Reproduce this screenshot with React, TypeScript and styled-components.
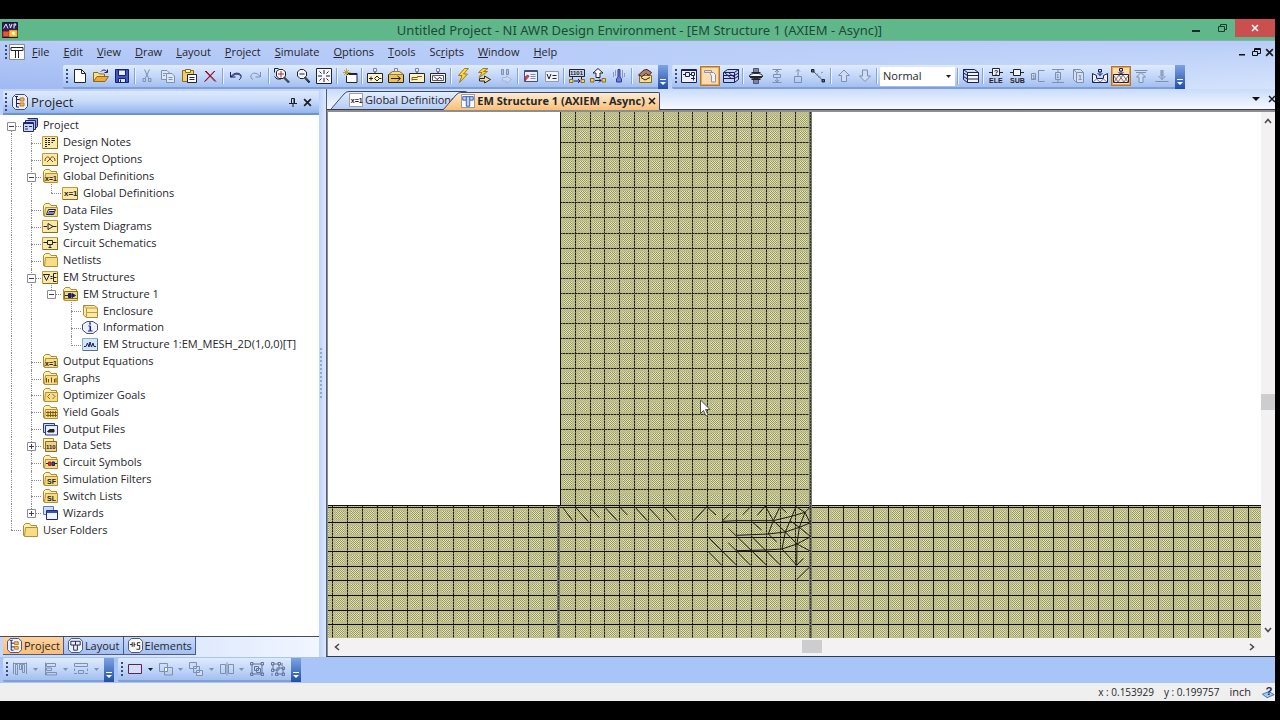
import React from "react";
import styled, { createGlobalStyle, css } from "styled-components";

const FONT = '"Open Sans", "Noto Sans", sans-serif';
const TITLE_FONT = '"Noto Sans", "Open Sans", sans-serif';

const GlobalStyle = createGlobalStyle`
  * { box-sizing: border-box; }
  body { margin: 0; background: #000; }
  button, select { font: inherit; color: inherit; border: 0; padding: 0; background: none; }
`;

/* ---------- icons ---------- */

// A shape is [path, stroke, fill]; a label is { t, x, y, size, fill }.
type Path = [string, string, string?];
type Label = { t: string; x: number; y: number; size: number; fill: string };
type Shape = Path | Label;

const NAVY = "#1b1f5e";
const INK = "#23232b";
const DIM = "#7f8fae";
const TAN = "#8a6c1c";
const GOLD = "#f3cf5b";
const PALE = "#fdf3c4";

const card: Shape[] = [["M.5 2.500H15.500V14.500H.5Z", "#c09a3c", "#fbe9a8"], ["M15.500 3V14.500H1", TAN]];
const folder: Shape[] = [
  ["M1.500 3.500L3.500 1.500H7.500L9 3.500H14.500V13.500H1.500Z", "#b08a2e", "#fdf0b4"],
  ["M3.500 5.500H15.500V14.500H2.500Z", "#b58f34", "#f6dc84"],
];
const block: Shape[] = [["M.5 5.500H15.500V14.500H.5Z", INK, PALE], ["M8 5V3.500", NAVY], ["M6.500 .5H9.500V3.500H6.500Z", "#7985a5", "#e9effc"]];

const ICONS: Record<string, Shape[]> = {
  newFile: [["M2.500 1.500H9.500L13.500 5.500V14.500H2.500Z", INK, "#fff"], ["M9.500 1.500V5.500H13.500", INK]],
  open: [["M.5 13.500V4.500H5L6.500 6H11.500V8", TAN, "#fbe08a"], ["M.5 13.500L4 8.500H15.500L12 13.500Z", TAN, "#f0a93a"], ["M8 3.500C9.500 1.500 13 1.500 14 4M14.500 1.500V4.500H11.500", NAVY]],
  save: [["M1.500 1.500H14.500V14.500H1.500Z", "#15207c", "#3d57c4"], ["M4.500 2H11.500V7.500H4.500Z", "#15207c", "#e8eefc"], ["M4.500 10.500H11.500V14.500H4.500Z", "#15207c", "#dfe4f2"], ["M6.500 11.500V14", "#15207c"]],
  cut: [["M5.500 1.500L9.500 10M10.500 1.500L6.500 10", DIM], ["M4 10.500H6.500V13.500H4Z M9.500 10.500H12V13.500H9.500Z", DIM]],
  copy: [["M1.500 2.500H7L9.500 5V11.500H1.500Z", DIM, "#dce7fb"], ["M6.500 5.500H12L14.500 8V14.500H6.500Z", DIM, "#dce7fb"], ["M3 5.500H6M3 7.500H5M8.500 9.500H12.500M8.500 11.500H12.500", DIM]],
  paste: [["M1.500 2.500H12.500V13.500H1.500Z", TAN, "#f2cf62"], ["M4.500 1.500H9.500V4.500H4.500Z", TAN, PALE], ["M6.500 6.500H15.500V14.500H6.500Z", INK, "#fff"], ["M8.500 9.500H13.500M8.500 11.500H13.500", NAVY]],
  del: [["M3 3L13 13.500M13 3L3 13.500M4 3L14 13.500M12.500 3L2.500 13.500", "#8f1020"]],
  undo: [["M2.500 4V9H7.500", NAVY], ["M3 8.500C6 4 12 4.500 13 7.500C13.500 10 12 11 11 12M3 9.500C6.500 5 12 5.500 12.500 8", NAVY]],
  redo: [["M12.500 4V9H7.500", DIM], ["M12 8.500C9 4 4 4.500 3 7.500C2.500 10 4 11 5 11.500", DIM]],
  zoomIn: [["M2.500 3.500L5 1.500H9L11.500 4V8L9 10.500H5L2.500 8Z", INK, "#eef3fd"], ["M10 9.500L15 14.500M10.500 9L15.500 14M9.500 10L14.500 15", INK], ["M7 3V9.500M4 6H10", "#b03030"], ["M.5 4.500V.5H4.500M.5 8.500L3 11H7", INK]],
  zoomOut: [["M2.500 4L5 1.500H8.500L11.500 4V8L8.500 10.500H5L2.500 8Z", INK, "#eef3fd"], ["M10 9.500L14.500 14.500M10.500 9L15 14M9.500 10L14 15", INK], ["M4.500 6H9.500", INK]],
  fit: [["M.5 .5H15.500V15.500H.5Z", INK, "#f4f7fe"], ["M8 2V6M8 10V14M2 8H6M10 8H14", INK], ["M3.500 3.500L5.500 5.500M12.500 3.500L10.500 5.500M3.500 12.500L5.500 10.500M12.500 12.500L10.500 10.500", INK]],
  newWin: [["M4.500 5.500H15V14.500H4.500Z", INK, "#fff"], ["M4.500 6.500H15", NAVY], ["M4.500 .5V8M1 4.500H8.500M2 2L7 7M7 2L2 7", "#b7a52c"]],
  blkPlus: [...block, ["M2 10.500H6M4 8.500V12.500M7.500 10.500L10 8L12.500 10.500L10 13ZM12.500 10.500H14.500", INK]],
  blkArrow: [["M.5 6.500H15.500V14.500H.5Z", INK, "#f0c34c"], ["M.5 6.500L4.500 3.500H11.500L15.500 6.500", TAN, "#f7dc84"], ["M3 10.500H12M9.500 8L12.500 10.500L9.500 13", NAVY], ["M6.500 .5H9.500V3.500H6.500Z", "#7985a5", "#e9effc"]],
  blkStep: [...block, ["M3 12.500V9.500H8.500V8.500H13M3 11.500H8.500", "#9c5a17"]],
  blkGraph: [...block, ["M2.500 7.500H13.500V12.500H2.500Z", "#4d5674", "#fff"], ["M4 8.500L7 11.500L9.500 9.500L12 11", NAVY]],
  bolt: [["M9.500 .5L3.500 7.500H7L4.500 14.500L12.500 6H8.500L13.500 .5Z", "#a37b13", "#ffd83a"]],
  boltStep: [["M7 .5L2.500 4.500H6L3 9.500L11.500 3.500H7.500L12 .5Z", "#a37b13", "#ffd83a"], ["M3.500 10.500H8.500V8L14.500 11.500L8.500 15V13H3.500Z", INK, "#fbe08a"]],
  stopDim: [["M4.500 1.500H6.500V6.500H4.500Z M9.500 1.500H11.500V6.500H9.500Z", DIM, "#b5c3de"], ["M5.500 9.500H9.500V8L14.500 11.500L9.500 15V13H5.500Z", "#a9b6d2", "#ccd8ef"]],
  sheet: [["M1.500 2.500H14.500V13.500H1.500Z", "#44507c", "#e9effc"], ["M2 3.500H14", "#44507c"], ["M2.500 13V8.500L5 7L6 9", "#c03030", "#d94a4a"], ["M7.500 6.500H12.500M7.500 8.500H12.500M7.500 10.500H12.500", DIM]],
  vars: [["M1.500 3.500H14.500V13.500H1.500Z", "#8e9ab8", "#eef3fd"], ["M3 6L5 11L7 6M8.500 7.500H12.500M8.500 10.500H12.500", INK]],
  tune: [["M.5 1.500H15.500V8.500H.5Z", INK, "#c9d4ee"], { t: "1101", x: 1, y: 7, size: 6, fill: INK }, ["M3.500 8.500V11M12.500 8.500V11", INK], ["M.5 11.500H4V14.500H.5Z M12 11.500H15.500V14.500H12Z", TAN, GOLD], ["M5 13H11M9 11L11 13L9 15", NAVY]],
  optimise: [["M8 .5L13 5H10V9.500H6V5H3Z", INK, "#fff"], ["M.5 10.500H4V14H.5Z M12 10.500H15.500V14H12Z", TAN, GOLD], ["M5 12.500H11M9 10.500L11 12.500L9 14.500", NAVY]],
  thermo: [["M7 1.500H9V9L10.500 11V14H5.500V11L7 9Z", "#353b9c", "#6f7fd8"], ["M11.500 2V10M4.500 2V8M2.500 4V9M13.500 5V9", "#8f9bb8"]],
  toolbox: [["M2.500 7.500H14.500V14.500H2.500Z", TAN, "#f8df8e"], ["M1.500 7L7 2L10 1.500L14.500 4.500L12 7.500L9 5.500L5 8.500Z", "#5a1d1d", "#a5846a"], ["M4 9.500L8 12L13 9.500", INK]],
  viewSch: [["M.5 1.500H15.500V14.500H.5Z", NAVY, "#eef3fd"], ["M.5 2.500H15.500", NAVY], ["M2 6.500H4.500M4.500 4.500H8.500V8.500H4.500ZM8.500 6.500H10.500M10.500 4.500H13.500V7.500H10.500ZM12.500 8V12.500M10 10.500H14", NAVY]],
  viewLay: [["M2.500 4.500V2.500H9.500V4", "#8a93a8"], ["M2.500 4.500H7.500L9 7.500M7.500 4.500H11.500L13.500 6.500V14H9.500V7.500", "#8a93a8", "#f6f1ea"]],
  view3d: [["M.5 4.500L4.500 1.500H15.500V11.500L11.500 14.500H.5Z", NAVY, "#c3d2f2"], ["M.5 4.500H11.500V14.500M11.500 4.500L15.500 1.500M.5 7.500H11.500L15.500 5M.5 10.500H11.500L15.500 8M2 5L9 11M6 5L11 9", NAVY]],
  ellipse: [["M5.500 .5H10.500V5H5.500ZM5.500 11H10.500V15.500H5.500Z", "#4d5674", "#7985a5"], ["M3.500 4.500H12.500M3.500 11.500H12.500", INK], ["M1.500 8C1.500 4.500 14.500 4.500 14.500 8C14.500 11.500 1.500 11.500 1.500 8Z", INK, "#f4f7fe"], ["M1.500 8.500H14.500M2.500 9.500H13.500", INK]],
  vspan: [["M3.500 1.500H12.500M3.500 14.500H12.500M8 2V6M8 10V14M6 4L8 2L10 4M6 12L8 14L10 12M4.500 6.500H11.500V9.500H4.500Z", DIM]],
  vlink: [["M8 1.500V8M6 3.500L8 1.500L10 3.500M4.500 8.500H11.500V14.500H4.500Z", DIM]],
  ruler: [["M3 3L13 12.500", "#4e587a"], ["M1.500 1.500H4V4H1.500ZM12 11.500H14.500V14H12Z", INK, "#5a6585"], ["M6 7.500L8 5.500M8.500 10L10.500 8M11 5L13 4", DIM]],
  up: [["M8 2L13.500 7.500H10.500V13.500H5.500V7.500H2.500Z", DIM, "#cfdcf5"]],
  down: [["M8 13.500L13.500 8H10.500V2H5.500V8H2.500Z", DIM, "#cfdcf5"]],
  layers: [["M.5 1.500L4.500 4.500V14.500L.5 11.500Z", NAVY, "#c3d2f2"], ["M4.500 4.500H15.500V14.500H4.500Z", NAVY, "#f4f7fe"], ["M.5 1.500H11.500L15.500 4.500M4.500 7.500H15.500M4.500 11H15.500M.5 5L4.500 7.500M.5 8.500L4.500 11", NAVY]],
  ele: [["M4.500 .5H11.500V7.500H4.500ZM1 4.500H4.500M11.500 4.500H15", INK, "#eef3fd"], { t: "?", x: 6, y: 7, size: 7, fill: INK }, { t: "ELE", x: 1, y: 15, size: 7, fill: INK }],
  sub: [["M4.500 1.500H11.500V7.500H4.500ZM1 4.500H4.500M11.500 4.500H15", INK, "#eef3fd"], { t: "SUB", x: 1, y: 15, size: 7, fill: INK }],
  port: [["M1.500 5.500H5.500V11.500H1.500ZM14.500 2.500H8.500V13.500H14.500", DIM], { t: "1", x: 2, y: 11, size: 6, fill: DIM }],
  portV: [["M2 1.500H14M2 14.500H14M8 1.500V4.500M8 11.500V14.500M5.500 4.500H10.500V11.500H5.500Z", DIM], { t: "1", x: 6, y: 10, size: 6, fill: DIM }],
  port3d: [["M2.500 1.500H9.500L12.500 4.500V14.500H5.500L2.500 11.500Z", DIM, "#d3dff6"], ["M5.500 4.500H12.500M5.500 4.500V14.500M2.500 1.500L5.500 4.500", DIM], { t: "1", x: 7, y: 12, size: 7, fill: DIM }],
  boxOpen: [["M.5 5.500L4.500 7.500V10.500H11.500V7.500L15.500 5.500V14.500H.5Z", NAVY, "#eef3fd"], ["M1 14L4.500 11L8 14L11.500 11L15 14", "#7985a5"], ["M8 7.500V3.500M5.500 5L8 7.500L10.500 5M6.500 1.500H9.500V4H6.500Z", NAVY]],
  boxCross: [["M.5 6.500H15.500V14.500H.5Z", NAVY, "#fdeed6"], ["M1 14L6 7L11 14L15 8M1 8L5 14L10 7L15 14", "#7d7480"], ["M8 6.500V3M5.500 4L8 6.500L10.500 4M6.500 .5H9.500V3H6.500Z", NAVY]],
  toTop: [["M1.500 2.500H14.500M3 4.500H13", DIM], ["M8 4.500L12.500 9H10V14.500H6V9H3.500Z", DIM, "#cfdcf5"]],
  toBottom: [["M1.500 13.500H14.500", DIM], ["M8 11.500V2M4.500 8L8 11.500L11.500 8M7 2V8.500M9 2V8.500", DIM]],
  alignT: [["M1.500 1.500V13M14.500 1.500V13M1.500 2.500H14.500M3.500 3.500H5.500V13.500H3.500ZM7.500 3.500H9.500V8.500H7.500ZM10.500 3.500H12.500V11.500H10.500Z", DIM]],
  alignL: [["M2.500 1.500V14.500M3.500 2.500H12.500V5.500H3.500ZM3.500 7H8.500V9.500H3.500ZM3.500 11.500H13.500V14H3.500Z", DIM]],
  distrib: [["M1.500 2.500H14.500V5.500H1.500ZM1.500 7.500V10M14.500 7.500V10M5.500 9.500H10.500V12.500H5.500ZM1 12.500H4M12 12.500H15", DIM]],
  rect: [["M1.500 3.500H14.500V12.500H1.500Z", "#5b2458", "#d5def5"]],
  overlap: [["M1.500 2.500H9.500V10.500H1.500ZM6.500 6.500H14.500V14H6.500Z", DIM], ["M6.500 6.500H9.500V10.500H6.500Z", DIM, "#fff"]],
  overlap2: [["M1.500 1.500H8.500V7.500H1.500ZM8.500 9.500H14.500V14.500H8.500Z", DIM, "#cfdcf5"], ["M5.500 5.500H11.500V11.500H5.500Z", DIM]],
  mirror: [["M1.500 3.500H6.500V12.500H1.500ZM9.500 3.500H14.500V12.500H9.500ZM8 1.500V14.500", DIM]],
  group: [["M3 3H13V13H3Z", "#66759a"], ["M1.500 1.500H4V4H1.500ZM12 1.500H14.500V4H12ZM1.500 12H4V14.500H1.500ZM12 12H14.500V14.500H12ZM5.500 5.500H9.500V9.500H5.500ZM7.500 7.500H11.500V11.500H7.500Z", "#66759a"]],
  ungroup: [["M3 3H9V9H3ZM7 7H13V13H7Z", "#66759a"], ["M1.500 1.500H4V4H1.500ZM8 1.500H10.500V4H8ZM1.500 8H4V10.500H1.500ZM12 6H14.500V8.500H12ZM12 12H14.500V14.500H12ZM5.500 12H8V14.500H5.500ZM12 2V5M2 12V15", "#66759a"]],
  // tree
  project: [["M5.500 1.500H15.500V9.500L13 12", "#20286e", "#8ea0dc"], ["M3.500 3.500H13.500V12.500H3.500Z", "#20286e", "#b7c5ee"], ["M1.500 5.500H11.500V14.500H1.500Z", "#20286e", "#c9d6f7"], ["M1.500 6.500H11.500M3 9.500H5.500M7 9.500H10M3 12H6", "#20286e"]],
  notes: [...card, ["M3 4.500H5M6 4.500H8M3 6.500H5M6 6.500H8M9.500 6.500H13M3 8.500H5M6 8.500H8M9.500 8.500H11M3 10.500H5M6 10.500H8M3 12.500H5M9.500 4.500H13", INK]],
  options: [...card, ["M3 10C3 5 7 5 8 8C9 5 13 5 13 10M5 11L8 8L11 11", "#7c4a12"]],
  defs: [...folder, { t: "x=1", x: 3, y: 13, size: 7, fill: INK }],
  def: [...card, { t: "x=1", x: 2, y: 11, size: 8, fill: INK }],
  docDef: [["M.5 .5H15.500V15.500H.5Z", "#8a8a92", "#fff"], { t: "x=1", x: 2, y: 11, size: 8, fill: INK }],
  dataFiles: [...folder, ["M6.500 7.500H13.500L11.500 12.500H4.500ZM7 9.500H12.500M6 11H11.500", NAVY, "#e9effc"]],
  sysDiag: [...card, ["M1.500 8.500H5M6 5.500L11 8.500L6 11.500ZM11 8.500H14.500", INK]],
  schematic: [...card, ["M1.500 7.500H5M5.500 5.500H10.500V9.500H5.500ZM10.500 7.500H14.500M8 9.500V12.500M6.500 12.500H9.500", INK]],
  folder,
  emFolder: [...card, ["M1.500 5.500H7.500L4.500 11.500ZM8.500 7.500H10.500M8.500 9.500H10.500M14.500 4.500H11.500V12.500H14.500M12 8.500H14.500", INK]],
  em: [...folder, ["M2.500 5.500H15.500V12.500H2.500Z", TAN, "#efd98c"], ["M3 9.500H6M6.500 7.500H9V11.500H6.500ZM10 7.500L13.500 9.500L10 11.500Z", NAVY, NAVY]],
  enclosure: [["M1.500 2.500H12.500L15.500 5V14.500H4.500L1.500 12Z", "#b08a2e", "#fbe9a8"], ["M4.500 5H15.500M4.500 5V14.500M1.500 2.500L4.500 5M4.500 9.500H15.500", "#c09a3c"]],
  info: [["M5 2.500H11L15.500 5.500V11L11 14.500H5L.5 11V5.500Z", "#4a5170", "#eef1fb"], ["M7 4H9M6.500 7H8.500M8 7V12M8.500 7V12M6 12H10.500M7 5H9", "#1b1fa8"]],
  meshPlot: [["M.5 2.500H15.500V14.500H.5Z", "#8fa9c8", "#d3e6fa"], ["M15.500 3V14.500H1", "#5d6f8c"], ["M2 10.500H4L5.500 7L7 11L8 6L9.500 11L11 7L12 10.500H14", NAVY]],
  graphs: [...folder, ["M4.500 12.500V8M6.500 12.500V9M9.500 12.500V7.500M12.500 12.500V9M14 12.500V8", "#7c4a12"]],
  goals: [...folder, ["M8 7L5.500 9.500L8 12M10.500 7L13 9.500L10.500 12", TAN]],
  yields: [...folder, ["M4 8.500H15M4 11.500H15M6 7V13M8.500 7V13M11 7V13M13.500 7V13", "#7c5a1c"]],
  outFiles: [["M1.500 2.500H12.500V11.500H1.500Z", "#2d3a8c", "#c9d6f7"], ["M3.500 4.500H15.500V14H3.500Z", "#2d3a8c", "#e9effc"], ["M5.500 10.500L8 8.500H12V11H6Z", INK, INK]],
  dataSets: [["M1.500 1.500H11.500V11.500H1.500Z", "#b08a2e", "#fdf0b4"], ["M3.500 4.500H14.500V14.500H3.500Z", "#8a6c1c", "#f2cf8a"], { t: "110", x: 4, y: 12, size: 6, fill: INK }],
  symbols: [...folder, ["M4 9.500H6.500M12 9.500H15", NAVY], ["M6.500 8H9V11.500H6.500Z", "#b02020", "#d03030"], ["M10 8H12.500V11.500H10Z", NAVY, "#3050c0"]],
  filters: [...folder, { t: "SF", x: 5, y: 13, size: 7, fill: INK }],
  switches: [...folder, { t: "SL", x: 5, y: 13, size: 7, fill: INK }],
  wizards: [["M1.500 1.500H11.500V9.500H1.500Z", "#5d79c4", "#cfdcf5"], ["M4.500 5.500H15.500V14.500H4.500Z", "#20286e", "#eef3fd"], ["M5 6.500H15M5 7.500H15", "#2f55c4"]],
  // panel chrome
  tee: [["M.5 .5H15.500V15.500H.5Z", "#8a8a92", "#fff"], ["M2 3.500H14M2 6.500H14M6.500 6.500V14M9.500 6.500V14M2 3.500V6.500M14 3.500V6.500", INK]],
  blueTee: [["M.5 .5H15.500V15.500H.5Z", "#8a8a92", "#fff"], ["M2 3H14V7H10V14H6V7H2ZM6 3V7M10 3V7", "#2f4fa4", "#bfd2f8"]],
  tree: [["M3.500 .5H12.500L15.500 3.500V12.500L12.500 15.500H3.500L.5 12.500V3.500Z", "#3d4a78", "#e9effc"], ["M3 2.500H6M4.500 3V13M4.500 5.500H9M4.500 9.500H9M4.500 13H7", NAVY], ["M8 4H12V7H8ZM8 9H12V12H8Z", "#c07a1c", "#f4b860"]],
  layoutTab: [["M3.500 .5H12.500L15.500 3.500V12.500L12.500 15.500H3.500L.5 12.500V3.500Z", "#3d4a78", "#eef3fd"], ["M3 3.500H13V7.500H3ZM8 3.500V7.500M6 7.500V13M10 7.500V13M6 13H10", NAVY]],
  elements: [["M3.500 .5H12.500L15.500 3.500V12.500L12.500 15.500H3.500L.5 12.500V3.500Z", "#3d4a78", "#f7f7f7"], ["M2 7H4.500M4.500 4.500V9.500M6.500 4.500V9.500M6.500 7H8M13 5H10V8H12.500V12H9", INK]],
  app: [["M.5 .5H15.500V15.500H.5Z", "#1d1638", "#2b2358"], ["M1.500 6.500L4 2L6 6.500M7.500 2L8.500 6L10 2M12 6.500V2H14L12.500 4.500", "#e8e4fa"], ["M1 9.500H7V14.500H1Z", "#c02a2a", "#e05a3a"], ["M7.500 8.500H15V14.500H7.500Z", "#e0a020", "#f6c838"], ["M10 11L12 10V13Z", "#fff", "#fff"]],
  help: [["M1.500 10.500L7 14.500L15 11L9 7.500Z", "#3f6aa8", "#a8c8ee"], { t: "?", x: 5, y: 11, size: 13, fill: "#1c2f5c" }],
};

const Svg = styled.svg`
  display: block;
  flex: none;
`;

const Icon = ({ name, size = 16 }: { name: string; size?: number }) => (
  <Svg width={size} height={size} viewBox="0 0 16 16" aria-hidden="true">
    {ICONS[name].map((s, i) =>
      Array.isArray(s) ? (
        <path key={i} d={s[0]} stroke={s[1]} fill={s[2] ?? "none"} />
      ) : (
        <text key={i} x={s.x} y={s.y} fontSize={s.size} fill={s.fill} fontWeight="700" fontFamily="Liberation Sans, sans-serif">
          {s.t}
        </text>
      )
    )}
  </Svg>
);

/* ---------- window ---------- */

const Screen = styled.div`
  display: flex;
  flex-direction: column;
  min-height: 100vh;
  padding: 19px 5px 19px 0;
  background: #000;
  color: #26272c;
  font: 11px/16px ${FONT};
`;

const TitleBar = styled.header`
  display: grid;
  grid-template-columns: 120px 1fr 120px;
  align-items: center;
  height: 22px;
  padding-left: 2px;
  background: #60b78a;
  border-bottom: 1px solid #7fb5a8;
`;

const Title = styled.h1`
  margin: 0;
  padding-left: 2px;
  font: 400 13px/20px ${TITLE_FONT};
  text-align: center;
  white-space: nowrap;
  color: #1f4a38;
`;

const WindowButtons = styled.div`
  display: flex;
  justify-content: flex-end;
  align-self: start;
`;

const WindowButton = styled.button<{ $close?: boolean }>`
  display: grid;
  place-items: center;
  width: ${(p) => (p.$close ? 40 : 26)}px;
  height: 18px;
  background: ${(p) => (p.$close ? "#c9504f" : "transparent")};
`;

const CommandArea = styled.div`
  background: linear-gradient(#b9cdf8, transparent), linear-gradient(90deg, #9fb9f2, #b9cff8 50%, #d5e4fc);
`;

const MenuBar = styled.nav`
  display: flex;
  align-items: center;
  height: 24px;
  padding: 0 0 2px 5px;
`;

const MenuButton = styled.button`
  margin-left: 14px;
  &:first-of-type { margin-left: 7px; }
  u { text-underline-offset: 1px; }
`;

const ChildButtons = styled.div`
  display: flex;
  margin-left: auto;
`;

const Grip = styled.span<{ $tall?: boolean }>`
  flex: none;
  width: 2px;
  height: ${(p) => (p.$tall ? 18 : 14)}px;
  margin-right: ${(p) => (p.$tall ? 5 : 2)}px;
  background: repeating-linear-gradient(#3c4c78 0 2px, transparent 2px 4px);
`;

const ToolbarRow = styled.div`
  display: flex;
  gap: 4px;
  padding-left: 63px;
`;

const LowerToolbars = styled.div`
  display: flex;
  gap: 4px;
  height: 26px;
  padding: 1px 3px;
  background: #a9c4f7;
`;

const Bar = styled.div<{ $width: number }>`
  display: flex;
  align-items: center;
  width: ${(p) => p.$width}px;
  height: 24px;
  padding-left: 3px;
  border-bottom: 2px solid #7f9fd8;
  border-radius: 2px;
  background: linear-gradient(#dfeafd, #c3d7f9 50%, #a3bff0);
`;

const BarItems = styled.div`
  display: flex;
  flex: 1;
  align-items: center;
  justify-content: space-between;
  padding-right: 3px;
`;

const Tool = styled.button<{ $active?: boolean; $slim?: boolean }>`
  display: grid;
  place-items: center;
  width: ${(p) => (p.$slim ? 9 : 20)}px;
  height: 20px;
  ${(p) =>
    p.$active &&
    css`
      border: 1px solid #b5762c;
      background: #fbdcae;
      outline: 1px solid #e9a54c;
      outline-offset: -2px;
    `}
`;

const Divider = styled.span`
  width: 2px;
  height: 16px;
  margin: 0 1px;
  border-left: 1px solid #86a3d8;
  border-right: 1px solid #eef4ff;
`;

const Overflow = styled.button`
  display: flex;
  align-items: flex-end;
  justify-content: center;
  width: 10px;
  height: 24px;
  margin-bottom: -2px;
  padding-bottom: 3px;
  background: linear-gradient(#7ea3e4, #1f4fa8);
`;

const Combo = styled.div`
  display: flex;
  align-items: center;
  width: 75px;
  height: 19px;
  padding: 0 4px 0 3px;
  background: #fff;
  select {
    flex: 1;
    min-width: 0;
    appearance: none;
    outline: 0;
  }
`;

const Caret = ({ dim }: { dim?: boolean }) => (
  <Svg width="5" height="3" viewBox="0 0 5 3" aria-hidden="true">
    <path d="M0 0H5L2.500 3Z" fill={dim ? "#7f8fae" : "#1c1c24"} />
  </Svg>
);

const OverflowMark = () => (
  <Overflow aria-label="More buttons">
    <Svg width="7" height="7" viewBox="0 0 7 7" aria-hidden="true">
      <path d="M0 .5H6" stroke="#fff" />
      <path d="M0 3H6L3 6Z" fill="#fff" />
    </Svg>
  </Overflow>
);

const ACTIVE = new Set(["viewLay", "boxCross"]);

// "|" is a divider, ">" a drop-down arrow, "normal" the view style box.
const Toolbar = ({ width, items }: { width: number; items: string[] }) => (
  <Bar $width={width} role="toolbar">
    <Grip />
    <BarItems>
      {items.map((name, i) => {
        if (name === "|") return <Divider key={i} />;
        if (name.startsWith(">"))
          return (
            <Tool key={i} $slim aria-label="Choices">
              <Caret dim={name === ">dim"} />
            </Tool>
          );
        if (name === "normal")
          return (
            <Combo key={i}>
              <select aria-label="View style" defaultValue="Normal">
                <option>Normal</option>
              </select>
              <Caret />
            </Combo>
          );
        return (
          <Tool key={i} $active={ACTIVE.has(name)} aria-label={name}>
            <Icon name={name} />
          </Tool>
        );
      })}
    </BarItems>
    <OverflowMark />
  </Bar>
);

/* ---------- project panel ---------- */

const Body = styled.div`
  display: flex;
  flex: 1;
  background: linear-gradient(90deg, #bcd2fb, #d9e6fd);
`;

const Side = styled.aside`
  display: flex;
  flex-direction: column;
  flex: 0 0 319px;
  padding-top: 2px;
`;

const PanelHead = styled.div`
  display: flex;
  align-items: center;
  height: 24px;
  margin-left: 3px;
  padding: 0 4px 0 2px;
  border-bottom: 2px solid #6f93d0;
  background: linear-gradient(#dde9fd, #c9dbfa 45%, #93b5ee);
`;

const PanelTitle = styled.h2`
  flex: 1;
  margin: 0 0 0 3px;
  font: 400 13px/20px ${FONT};
`;

const PanelButton = styled.button<{ $narrow?: boolean }>`
  display: grid;
  place-items: center;
  width: ${(p) => (p.$narrow ? 11 : 15)}px;
  height: 16px;
`;

const TreeBox = styled.div`
  flex: 1;
  padding-top: 2px;
  background: #fff;
  border-bottom: 1px solid #4a4a52;
`;

const TreeList = styled.ul`
  display: grid;
  grid-auto-rows: 1fr;
  height: 421px;
  margin: 0;
  padding: 0 0 0 2px;
  list-style: none;
`;

const TreeRow = styled.li`
  display: flex;
  align-items: stretch;
  white-space: nowrap;
`;

const TreeCell = styled.span<{ $up: boolean; $down: boolean; $arm: boolean }>`
  position: relative;
  flex: none;
  width: 20px;
  &::before {
    content: "";
    display: ${(p) => (p.$up || p.$down ? "block" : "none")};
    position: absolute;
    left: 9px;
    top: ${(p) => (p.$up ? 0 : 50)}%;
    bottom: ${(p) => (p.$down ? 0 : 50)}%;
    border-left: 1px dotted #8c8c94;
  }
  &::after {
    content: "";
    position: absolute;
    left: 9px;
    right: 1px;
    top: 9px;
    border-top: ${(p) => (p.$arm ? "1px dotted #8c8c94" : "0")};
  }
`;

const Toggle = styled.button`
  position: absolute;
  z-index: 1;
  left: 5px;
  top: 5px;
  width: 9px;
  height: 9px;
  background: #fff;
`;

const TreeLabel = styled.span`
  display: flex;
  align-items: center;
  gap: 5px;
`;

type Node = { label: string; icon: string; depth: number; toggle?: "+" | "-" };
const n = (depth: number, icon: string, label: string, toggle?: "+" | "-"): Node => ({ depth, icon, label, toggle });

const NODES: Node[] = [
  n(0, "project", "Project", "-"),
  n(1, "notes", "Design Notes"),
  n(1, "options", "Project Options"),
  n(1, "defs", "Global Definitions", "-"),
  n(2, "def", "Global Definitions"),
  n(1, "dataFiles", "Data Files"),
  n(1, "sysDiag", "System Diagrams"),
  n(1, "schematic", "Circuit Schematics"),
  n(1, "folder", "Netlists"),
  n(1, "emFolder", "EM Structures", "-"),
  n(2, "em", "EM Structure 1", "-"),
  n(3, "enclosure", "Enclosure"),
  n(3, "info", "Information"),
  n(3, "meshPlot", "EM Structure 1:EM_MESH_2D(1,0,0)[T]"),
  n(1, "defs", "Output Equations"),
  n(1, "graphs", "Graphs"),
  n(1, "goals", "Optimizer Goals"),
  n(1, "yields", "Yield Goals"),
  n(1, "outFiles", "Output Files"),
  n(1, "dataSets", "Data Sets", "+"),
  n(1, "symbols", "Circuit Symbols"),
  n(1, "filters", "Simulation Filters"),
  n(1, "switches", "Switch Lists"),
  n(1, "wizards", "Wizards", "+"),
  n(0, "folder", "User Folders"),
];

// True when a later row still belongs to the branch drawn in column `level`.
const continues = (index: number, level: number) => {
  for (const next of NODES.slice(index + 1)) {
    if (next.depth < level) return false;
    if (next.depth === level) return true;
  }
  return false;
};

const ProjectTree = () => (
  <TreeList role="tree" aria-label="Project">
    {NODES.map((node, i) => (
      <TreeRow key={i} role="treeitem" aria-level={node.depth + 1}>
        {Array.from({ length: node.depth + 1 }, (_, level) => {
          const own = level === node.depth;
          const down = continues(i, level);
          return (
            <TreeCell key={level} $up={own ? i > 0 : down} $down={down} $arm={own}>
              {own && node.toggle && (
                <Toggle aria-label={node.toggle === "+" ? "Expand" : "Collapse"}>
                  <Svg width="9" height="9" viewBox="0 0 9 9" aria-hidden="true">
                    <path d="M.5 .5H8.500V8.500H.5Z" stroke="#8c8c94" fill="#fff" />
                    <path d={node.toggle === "+" ? "M2 4.500H7M4.500 2V7" : "M2 4.500H7"} stroke="#3c3c58" />
                  </Svg>
                </Toggle>
              )}
            </TreeCell>
          );
        })}
        <TreeLabel>
          <Icon name={node.icon} />
          {node.label}
        </TreeLabel>
      </TreeRow>
    ))}
  </TreeList>
);

const SideTabs = styled.div`
  display: flex;
  height: 20px;
  padding: 0 0 2px 3px;
  background: linear-gradient(90deg, #c3d6fb, #f1f6ff);
`;

const SideTab = styled.button<{ $active?: boolean }>`
  display: flex;
  align-items: center;
  gap: 2px;
  height: 18px;
  padding: 0 3px 0 4px;
  border: solid #4a5a8c;
  border-width: 0 1px 1px 0;
  background: ${(p) => (p.$active ? "linear-gradient(#fbd3a0, #fbbf78)" : "linear-gradient(#c9dafa, #a3bff2)")};
`;

const Splitter = styled.div`
  display: flex;
  align-items: center;
  flex: 0 0 7px;
  padding-left: 1px;
  background: linear-gradient(90deg, #bed3fb, #dce8fd);
  &::before {
    content: "";
    width: 2px;
    height: 50px;
    background: repeating-linear-gradient(#8aa6de 0 2px, transparent 2px 4px);
  }
`;

/* ---------- document area ---------- */

const Documents = styled.main`
  display: flex;
  flex: 1;
  flex-direction: column;
  min-width: 0;
  border-left: 1px solid #4f5a78;
  border-bottom: 1px solid #2f3a58;
`;

const TabStrip = styled.div`
  display: flex;
  align-items: flex-end;
  height: 21px;
  padding-left: 4px;
  background: linear-gradient(#c9dbfa, #f6f9ff);
  border-bottom: 1px solid #3c3c44;
`;

const DocTabBox = styled.div<{ $active?: boolean }>`
  display: flex;
  height: 18px;
  margin-left: ${(p) => (p.$active ? -24 : 0)}px;
  margin-bottom: ${(p) => (p.$active ? -1 : 0)}px;
  z-index: ${(p) => (p.$active ? 1 : 0)};
`;

const DocTabBody = styled.div<{ $active?: boolean }>`
  display: flex;
  align-items: center;
  gap: 2px;
  padding: 0 ${(p) => (p.$active ? 1 : 10)}px 2px 0;
  border-top: 1px solid #3c4a70;
  border-right: 1px solid #3c4a70;
  border-radius: 0 2px 0 0;
  white-space: nowrap;
  font-weight: ${(p) => (p.$active ? 700 : 400)};
  background: ${(p) => (p.$active ? "linear-gradient(#fdebd0, #fbc078)" : "linear-gradient(#e3edfe, #b3ccf6)")};
`;

const StripButtons = styled.div`
  display: flex;
  align-items: center;
  gap: 8px;
  height: 20px;
  margin: 0 -1px 0 auto;
`;

const Cross = ({ size, color = "#1c1c24", weight = 1 }: { size: number; color?: string; weight?: number }) => (
  <Svg width={size} height={size} viewBox="0 0 8 8" aria-hidden="true">
    <path d="M1 1L7 7M7 1L1 7" stroke={color} strokeWidth={weight + 0.5} />
  </Svg>
);

const DocTab = ({ icon, label, active }: { icon: string; label: string; active?: boolean }) => (
  <DocTabBox $active={active}>
    <Svg width="18" height="18" viewBox="0 0 18 18" aria-hidden="true">
      <defs>
        <linearGradient id={`slant-${icon}`} x2="0" y2="1">
          <stop stopColor={active ? "#fdebd0" : "#e3edfe"} />
          <stop offset="1" stopColor={active ? "#fbc078" : "#b3ccf6"} />
        </linearGradient>
      </defs>
      <path d="M0 18L13 3Q15 .5 18 .5V18Z" fill={`url(#slant-${icon})`} />
      <path d="M0 18L13 3Q15 .5 18 .5" fill="none" stroke="#3c4a70" />
    </Svg>
    <DocTabBody $active={active}>
      <Icon name={icon} size={14} />
      <button>{label}</button>
      {active && (
        <PanelButton $narrow aria-label="Close tab">
          <Cross size={8} />
        </PanelButton>
      )}
    </DocTabBody>
  </DocTabBox>
);

const Viewport = styled.div`
  display: grid;
  grid-template-columns: minmax(0, 1fr) 14px;
  grid-template-rows: minmax(0, 1fr) 18px;
  flex: 1;
  border-top: 2px solid #8e8e90;
  border-left: 1px solid #8e8e90;
  background: #f4f1f2;
`;

const Canvas = styled.div`
  position: relative;
  overflow: hidden;
  background: #fff;
  svg { position: absolute; inset: 0; }
`;

const Scroll = styled.div<{ $vertical?: boolean }>`
  display: flex;
  flex-direction: ${(p) => (p.$vertical ? "column" : "row")};
  align-items: center;
  padding: ${(p) => (p.$vertical ? "5px 0 4px" : "0 5px 1px")};
`;

const Track = styled.div<{ $grow: number }>`
  flex: ${(p) => p.$grow} 1 0;
`;

const Thumb = styled.div<{ $vertical?: boolean }>`
  width: ${(p) => (p.$vertical ? 14 : 20)}px;
  height: ${(p) => (p.$vertical ? 16 : 13)}px;
  background: #cdcdcf;
`;

const Chevron = ({ turn }: { turn: number }) => (
  <Svg width="8" height="8" viewBox="0 0 8 8" aria-hidden="true">
    <path d="M1 6L4 2.500L7 6" fill="none" stroke="#4a4a50" strokeWidth="1.600" transform={`rotate(${turn} 4 4)`} />
  </Svg>
);

/* ---------- mesh drawing ---------- */

const steps = (from: number, to: number, pitch: number) =>
  Array.from({ length: Math.floor((to - from) / pitch) + 1 }, (_, i) => Math.round(from + i * pitch) + 0.5);

const FAR_X = 2600;
const FAR_Y = 1400;
const TRACE_L = 232; // left edge of the vertical trace
const TRACE_R = 483; // right edge of the vertical trace
const TOP = 394; // upper edge of the horizontal trace

const vLines = (xs: number[], y1: number, y2: number) => xs.map((x) => `M${x} ${y1}V${y2}`).join("");
const hLines = (ys: number[], x1: number, x2: number) => ys.map((y) => `M${x1} ${y}H${x2}`).join("");

const columnXs = steps(TRACE_L + 15, TRACE_R - 6, 14.67);
const columnYs = steps(15, TOP - 6, 15.08);
const lowerYs = steps(TOP + 16, FAR_Y, 14.6);
const leftXs = steps(4, TRACE_L - 6, 15.07);
const rightXs = steps(500, FAR_X, 15);

// Lighter stipple in the middle of every mesh cell, placed left of and above each grid crossing.
const spots = (xs: number[], ys: number[]) =>
  ys.map((y) => xs.map((x) => `M${x - 11.5} ${y - 11.5}h8v8h-8Z`).join("")).join("");
const SPOTS =
  spots([...columnXs, TRACE_R - 0.5], [...columnYs, TOP + 0.5]) +
  spots([...leftXs, TRACE_L + 0.5, ...columnXs, TRACE_R - 0.5, ...rightXs.filter((x) => x < 2000)], lowerYs.slice(0, 60));

// Triangulated cells around the junction, on a grid of a third of a pixel.
const TRIANGLES =
  "M70 85L98 122M107 82L145 125M150 82L178 113M195 82L232 122M240 82L262 105M284 80L322 122M328 85L362 122M372 80L410 122" +
  "M460 124L500 80L528 105M546 124L570 100M608 104L632 80M652 106L676 78L700 122L720 80L740 98M736 156L768 80L795 97L812 80" +
  "M795 97L810 128M795 97L778 142M546 124L590 122H700L750 110L795 97M590 166L685 162L736 156L778 142L812 128" +
  "M590 212L680 210L726 207L771 192L812 170M634 124L665 150M700 122L736 156L771 192L812 214M700 122L685 162L710 186" +
  "M736 156L726 207L770 256M750 122L778 142L812 170M778 142L771 192L770 256L790 235M565 145L680 256M636 170L722 256" +
  "M505 172L590 256M505 215L545 256M565 188L632 256M770 299L812 258";

const Mesh = () => (
  <svg width="100%" height="100%" role="img" aria-label="Meshed structure">
    <defs>
      <pattern id="dither" width="2" height="2" patternUnits="userSpaceOnUse">
        <rect width="2" height="2" fill="#c8c897" />
        <path d="M0 0H1V1H0ZM1 1H2V2H1Z" fill="#b3b380" />
      </pattern>
      <pattern id="stipple" width="2" height="2" patternUnits="userSpaceOnUse">
        <rect width="2" height="2" fill="#e6e6b0" />
        <path d="M0 0H1V1H0ZM1 1H2V2H1Z" fill="#94946a" />
      </pattern>
    </defs>
    <g shapeRendering="crispEdges">
      <g fill="url(#dither)">
        <rect x={TRACE_L} width={TRACE_R - TRACE_L} height={TOP} />
        <rect y={TOP} width="100%" height={FAR_Y} />
      </g>
      <path d={SPOTS} fill="url(#stipple)" />
      <g fill="none" stroke="#1d1d14">
        <path d={vLines(columnXs, 0, TOP)} stroke="#6e6e50" />
        <path d={vLines(columnXs, 0, TOP)} strokeDasharray="2 1" />
        <path d={hLines(columnYs, TRACE_L, TRACE_R)} stroke="#6e6e50" />
        <path d={hLines(columnYs, TRACE_L, TRACE_R)} strokeDasharray="2 1" />
        <path d={vLines([...leftXs, ...columnXs], TOP, FAR_Y)} stroke="#6e6e50" />
        <path d={vLines([...leftXs, ...columnXs], TOP, FAR_Y)} strokeDasharray="2 1" />
        <path d={vLines(rightXs, TOP, FAR_Y)} />
        <path d={hLines(lowerYs, 0, FAR_X)} stroke="#0c0c08" />
        <path d={`M${TRACE_L + 0.5} 0V${TOP}M0 ${TOP - 0.5}H${FAR_X}M0 ${TOP + 1.5}H${FAR_X}`} stroke="#111" />
      </g>
      <g stroke="#77776f" strokeWidth="3">
        <path d={`M${TRACE_R - 0.5} 0V${FAR_Y}M${TRACE_L - 1.5} ${TOP}V${FAR_Y}`} />
        <path d={`M${TRACE_R - 0.5} 0V${FAR_Y}M${TRACE_L - 1.5} ${TOP}V${FAR_Y}`} stroke="#35352e" strokeWidth="1" strokeDasharray="2 1" />
      </g>
    </g>
    <g transform="translate(212 368) scale(.33333)">
      <path d={TRIANGLES} fill="none" stroke="#1d1d10" vectorEffect="non-scaling-stroke" />
    </g>
    <path d="M372.500 288V301.500L375.500 298.500L378 304L380 303L377.500 297.500H382Z" fill="#fff" stroke="#55554c" />
  </svg>
);

/* ---------- status ---------- */

const StatusBar = styled.footer`
  display: flex;
  align-items: center;
  justify-content: flex-end;
  gap: 10px;
  height: 18px;
  background: #efeff0;
`;

const Reading = styled.span`
  font-size: 10px;
`;

const MENUS: [string, string, string][] = [
  ["", "F", "ile"], ["", "E", "dit"], ["", "V", "iew"], ["", "D", "raw"], ["", "L", "ayout"], ["", "P", "roject"],
  ["", "S", "imulate"], ["", "O", "ptions"], ["", "T", "ools"], ["Sc", "r", "ipts"], ["", "W", "indow"], ["", "H", "elp"],
];

const MAIN_TOOLS = (
  "newFile open save | cut copy paste del | undo redo | zoomIn zoomOut fit | newWin | blkPlus blkArrow blkStep blkGraph | " +
  "bolt boltStep stopDim | sheet vars | tune optimise thermo | toolbox"
).split(" ");
const LAYOUT_TOOLS = (
  "viewSch viewLay view3d | ellipse vspan vlink ruler | up down | normal | layers | ele sub port portV port3d boxOpen boxCross toTop toBottom"
).split(" ");

export default function App() {
  return (
    <Screen>
      <GlobalStyle />
      <TitleBar>
        <Icon name="app" />
        <Title>Untitled Project - NI AWR Design Environment - [EM Structure 1 (AXIEM - Async)]</Title>
        <WindowButtons>
          <WindowButton aria-label="Minimize">
            <Svg width="10" height="10" viewBox="0 0 10 10"><path d="M1 7.500H9M1 8.500H9" stroke="#1c2c24" /></Svg>
          </WindowButton>
          <WindowButton aria-label="Restore">
            <Svg width="11" height="10" viewBox="0 0 11 10"><path d="M1.500 3.500H7.500V8.500H1.500ZM3.500 3V1.500H9.500V6.500H8" fill="none" stroke="#1c3c2c" /></Svg>
          </WindowButton>
          <WindowButton $close aria-label="Close">
            <Cross size={8} color="#fff" />
          </WindowButton>
        </WindowButtons>
      </TitleBar>

      <CommandArea>
        <MenuBar>
          <Grip />
          <Icon name="tee" size={16} />
          {MENUS.map(([before, key, after]) => (
            <MenuButton key={key}>
              {before}
              <u>{key}</u>
              {after}
            </MenuButton>
          ))}
          <ChildButtons>
            <PanelButton aria-label="Minimize document">
              <Svg width="8" height="8" viewBox="0 0 8 8"><path d="M1 6.500H7M1 7H7" stroke="#111" /></Svg>
            </PanelButton>
            <PanelButton aria-label="Restore document">
              <Svg width="9" height="8" viewBox="0 0 9 8"><path d="M.5 3.500H5.500V7.500H.5ZM2.500 3V.5H8.500V5.500H6M2.500 1.500H8.500" fill="none" stroke="#111" /></Svg>
            </PanelButton>
            <PanelButton $narrow aria-label="Close document">
              <Cross size={9} />
            </PanelButton>
          </ChildButtons>
        </MenuBar>
        <ToolbarRow>
          <Toolbar width={605} items={MAIN_TOOLS} />
          <Toolbar width={513} items={LAYOUT_TOOLS} />
        </ToolbarRow>
      </CommandArea>

      <Body>
        <Side>
          <PanelHead>
            <Grip $tall />
            <Icon name="tree" />
            <PanelTitle>Project</PanelTitle>
            <PanelButton aria-label="Auto hide">
              <Svg width="8" height="9" viewBox="0 0 8 9"><path d="M2.500 5V.5H5.500V5M0 5.500H8M4 6V9M5 1V5" fill="none" stroke="#1c1c24" /></Svg>
            </PanelButton>
            <PanelButton aria-label="Close panel">
              <Cross size={9} />
            </PanelButton>
          </PanelHead>
          <TreeBox>
            <ProjectTree />
          </TreeBox>
          <SideTabs>
            <SideTab $active><Icon name="tree" size={15} />Project</SideTab>
            <SideTab><Icon name="layoutTab" size={15} />Layout</SideTab>
            <SideTab><Icon name="elements" size={15} />Elements</SideTab>
          </SideTabs>
        </Side>
        <Splitter />
        <Documents>
          <TabStrip>
            <DocTab icon="docDef" label="Global Definitions" />
            <DocTab icon="blueTee" label="EM Structure 1 (AXIEM - Async)" active />
            <StripButtons>
              <Svg width="8" height="4" viewBox="0 0 8 4"><path d="M0 0H8L4 4Z" fill="#111" /></Svg>
              <Cross size={8} />
            </StripButtons>
          </TabStrip>
          <Viewport>
            <Canvas>
              <Mesh />
            </Canvas>
            <Scroll $vertical>
              <Chevron turn={0} />
              <Track $grow={55} />
              <Thumb $vertical />
              <Track $grow={44} />
              <Chevron turn={180} />
            </Scroll>
            <Scroll>
              <Chevron turn={-90} />
              <Track $grow={52} />
              <Thumb />
              <Track $grow={48} />
              <Chevron turn={90} />
            </Scroll>
          </Viewport>
        </Documents>
      </Body>

      <LowerToolbars>
        <Toolbar width={111} items={["alignT", ">dim", "alignL", ">dim", "distrib", ">dim"]} />
        <Toolbar width={183} items={["rect", ">", "overlap", ">dim", "overlap2", ">dim", "mirror", ">dim", "group", "ungroup"]} />
      </LowerToolbars>
      <StatusBar>
        <Reading>x : 0.153929</Reading>
        <Reading>y : 0.199757</Reading>
        <span>inch</span>
        <Icon name="help" size={14} />
      </StatusBar>
    </Screen>
  );
}
